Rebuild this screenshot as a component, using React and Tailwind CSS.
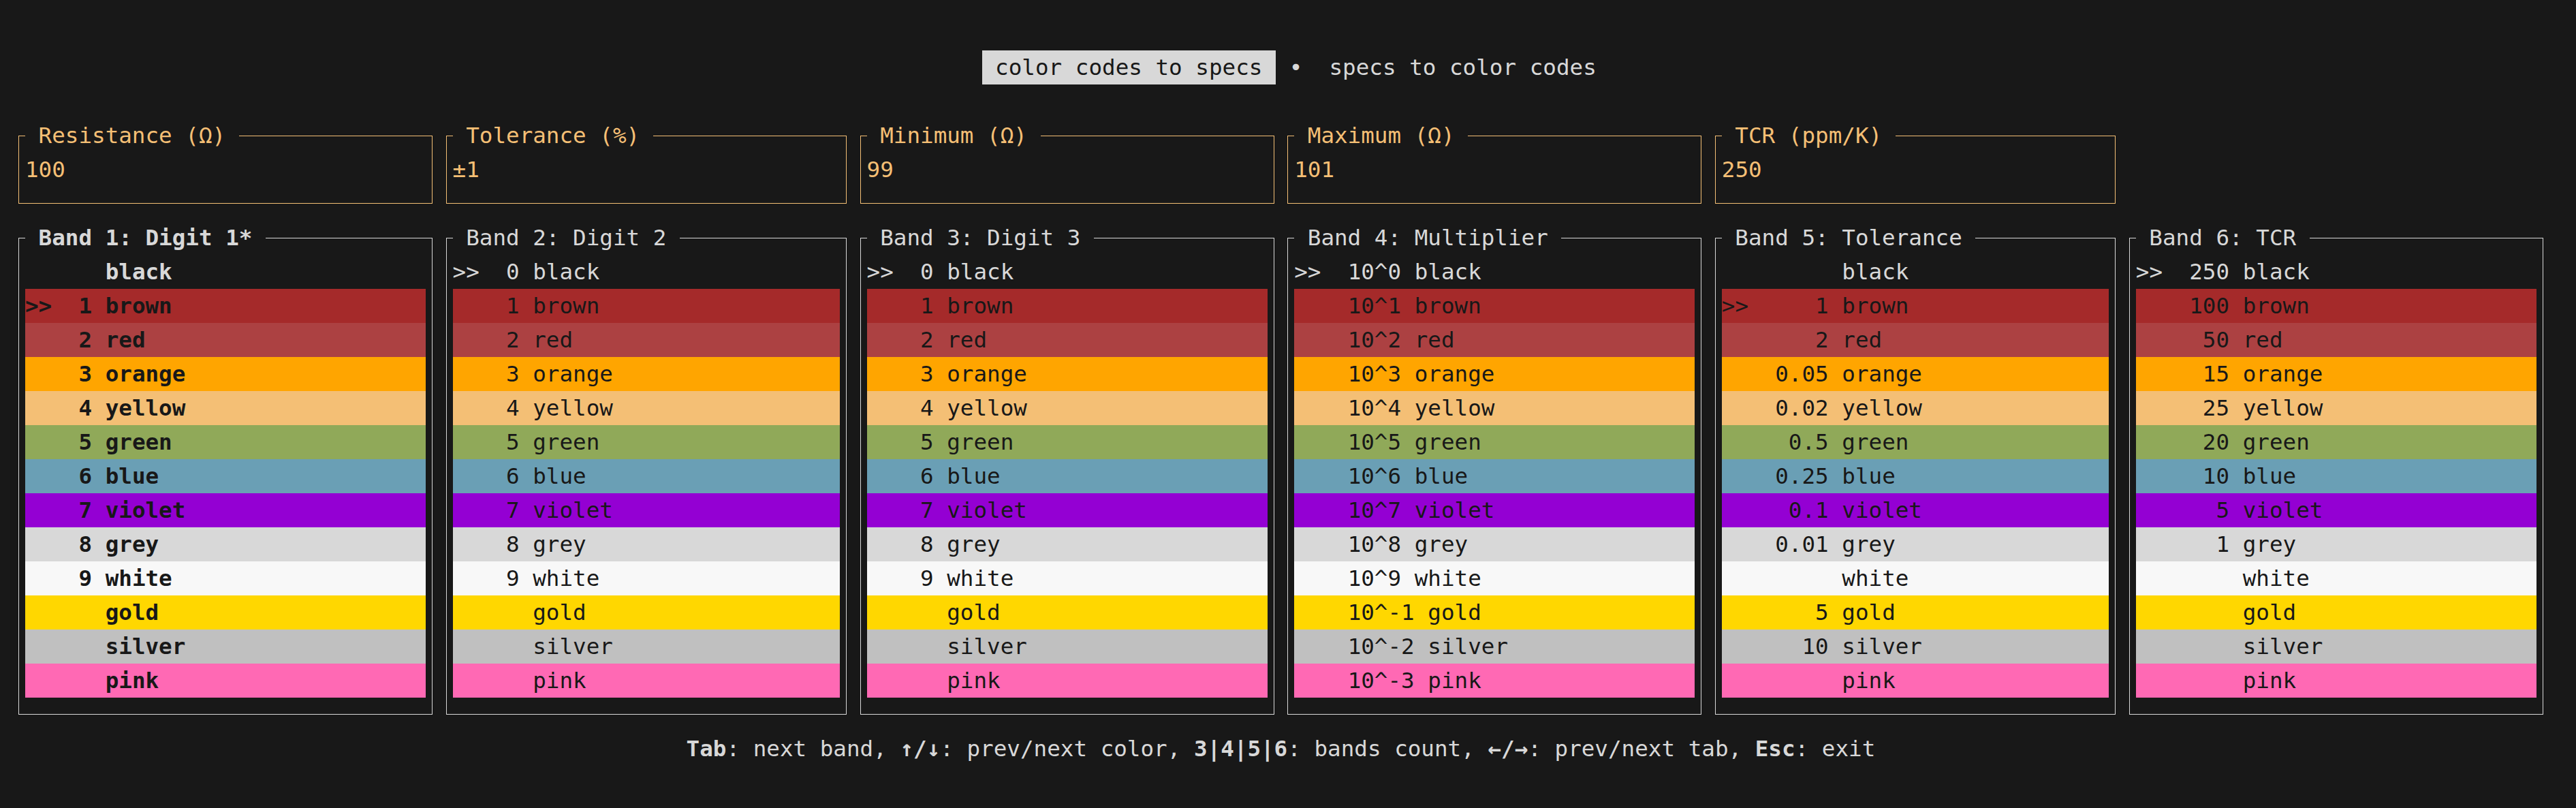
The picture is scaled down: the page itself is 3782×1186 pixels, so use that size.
import React from "react"

// colour table shared by every band
const COLORS = [
  { name: "black", bg: "bg-transparent", fg: "text-[#d8d8d8]" },
  { name: "brown", bg: "bg-[#a52a2a]", fg: "text-[#181818]" },
  { name: "red", bg: "bg-[#ac4142]", fg: "text-[#181818]" },
  { name: "orange", bg: "bg-[#ffa500]", fg: "text-[#181818]" },
  { name: "yellow", bg: "bg-[#f4bf75]", fg: "text-[#181818]" },
  { name: "green", bg: "bg-[#90a959]", fg: "text-[#181818]" },
  { name: "blue", bg: "bg-[#6a9fb5]", fg: "text-[#181818]" },
  { name: "violet", bg: "bg-[#9400d3]", fg: "text-[#181818]" },
  { name: "grey", bg: "bg-[#d8d8d8]", fg: "text-[#181818]" },
  { name: "white", bg: "bg-[#f8f8f8]", fg: "text-[#181818]" },
  { name: "gold", bg: "bg-[#ffd700]", fg: "text-[#181818]" },
  { name: "silver", bg: "bg-[#c0c0c0]", fg: "text-[#181818]" },
  { name: "pink", bg: "bg-[#ff69b4]", fg: "text-[#181818]" },
]

const DIGITS = ["0", "1", "2", "3", "4", "5", "6", "7", "8", "9", "", "", ""]

const BANDS = [
  {
    title: "Band 1: Digit 1*",
    width: 1,
    selected: 1,
    active: true,
    values: ["", ...DIGITS.slice(1)],
  },
  { title: "Band 2: Digit 2", width: 1, selected: 0, values: DIGITS },
  { title: "Band 3: Digit 3", width: 1, selected: 0, values: DIGITS },
  {
    title: "Band 4: Multiplier",
    width: 4,
    selected: 0,
    values: [
      "10^0", "10^1", "10^2", "10^3", "10^4", "10^5", "10^6", "10^7",
      "10^8", "10^9", "10^-1", "10^-2", "10^-3",
    ],
  },
  {
    title: "Band 5: Tolerance",
    width: 4,
    selected: 1,
    values: ["", "1", "2", "0.05", "0.02", "0.5", "0.25", "0.1", "0.01", "", "5", "10", ""],
  },
  {
    title: "Band 6: TCR",
    width: 3,
    selected: 0,
    values: ["250", "100", "50", "15", "25", "20", "10", "5", "1", "", "", "", ""],
  },
]

const INPUTS = [
  { title: "Resistance (Ω)", value: "100" },
  { title: "Tolerance (%)", value: "±1" },
  { title: "Minimum (Ω)", value: "99" },
  { title: "Maximum (Ω)", value: "101" },
  { title: "TCR (ppm/K)", value: "250" },
]

// column widths in terminal cells (32 / 31 cells)
const WIDTHS = [
  "w-[627.6px]",
  "w-[608px]",
  "w-[627.6px]",
  "w-[627.6px]",
  "w-[608px]",
  "w-[627.6px]",
]

const Panel = ({ width, title, tone, bold, children }) => (
  <div className={`${width} shrink-0 px-[9.8px] pb-[25px]`}>
    <fieldset className={`border ${tone.border} px-[9px] pb-[24px]`}>
      <legend className={`px-[19.6px] whitespace-pre ${tone.text} ${bold ? "font-bold" : ""}`}>
        {title}
      </legend>
      {children}
    </fieldset>
  </div>
)

const gray = { border: "border-[#d8d8d8]", text: "text-[#d8d8d8]" }
const amber = { border: "border-[#f4bf75]", text: "text-[#f4bf75]" }

const BandList = ({ band }) => (
  <div className={band.active ? "font-bold" : ""}>
    {COLORS.map((c, i) => {
      const marker = i === band.selected ? ">>" : "  "
      const line = `${marker}  ${band.values[i].padStart(band.width)} ${c.name}`
      return (
        <div key={c.name} className={`h-[50px] whitespace-pre ${c.bg} ${c.fg}`}>
          {line}
        </div>
      )
    })}
  </div>
)

export default function App() {
  return (
    <div className="h-[1186px] w-[3782px] overflow-hidden bg-[#181818] pl-[17.2px] pt-[74px] font-['DejaVu_Sans_Mono','Liberation_Mono',monospace] text-[32.58px] leading-[50px] text-[#d8d8d8]">
      <div className="w-[3726.5px]">
        {/* tabs */}
        <div className="flex h-[50px] justify-center whitespace-pre pl-[44px]">
          <span className="bg-[#d8d8d8] text-[#181818]"> color codes to specs </span>
          <span> • </span>
          <span> specs to color codes </span>
        </div>

        {/* spec inputs */}
        <div className="mt-[50px] flex">
          {INPUTS.map((inp, i) => (
            <Panel key={inp.title} width={WIDTHS[i]} title={inp.title} tone={amber}>
              <div className="h-[50px] whitespace-pre text-[#f4bf75]">{inp.value}</div>
            </Panel>
          ))}
        </div>

        {/* band pickers */}
        <div className="flex">
          {BANDS.map((band, i) => (
            <Panel
              key={band.title}
              width={WIDTHS[i]}
              title={band.title}
              tone={gray}
              bold={band.active}
            >
              <BandList band={band} />
            </Panel>
          ))}
        </div>

        {/* help line */}
        <div className="h-[50px] text-center whitespace-pre">
          <b>Tab</b>: next band, <b>↑/↓</b>: prev/next color, <b>3|4|5|6</b>: bands count,{" "}
          <b>←/→</b>: prev/next tab, <b>Esc</b>: exit
        </div>
      </div>
    </div>
  )
}
